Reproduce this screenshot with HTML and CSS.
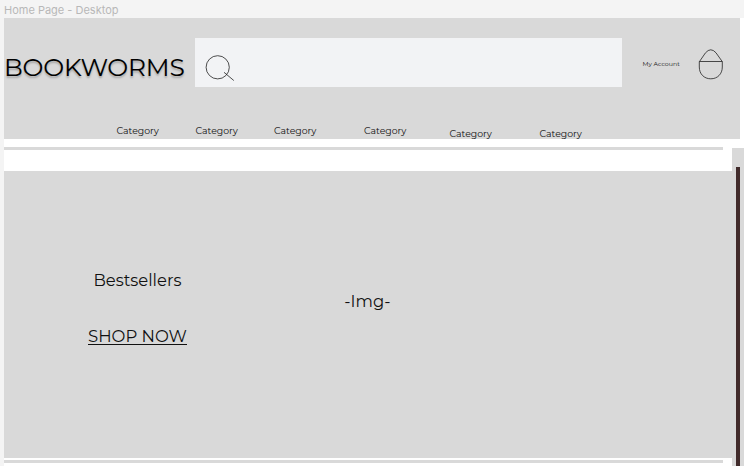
FILE: index.html
```html
<!DOCTYPE html>
<html lang="en">
<head>
<meta charset="utf-8">
<title>Bookworms</title>
<link rel="stylesheet" href="styles.css">
</head>
<body>
<div class="frame-label">Home Page - Desktop</div>
<div class="page">
  <header class="header">
    <div class="top-row">
      <h1 class="logo">BOOKWORMS</h1>
      <div class="search">
        <svg width="30" height="28" viewBox="0 0 30 28"><circle cx="12.7" cy="12.3" r="11.6"/><path d="M19 17.3L28.8 25.5"/></svg>
      </div>
      <a class="account">My Account</a>
      <svg class="bag" width="26" height="32" viewBox="0 0 26 32"><path d="M1.5 12.5L7.5 3.8Q12.8 -2.2 18 3.8L24.2 12.5"/><path d="M1.3 12.5H24.3V18C24.3 25 19.5 29.8 12.8 29.8S1.3 25 1.3 18Z"/></svg>
    </div>
    <nav class="nav">
      <a>Category</a>
      <a>Category</a>
      <a>Category</a>
      <a>Category</a>
      <a class="low">Category</a>
      <a class="low">Category</a>
    </nav>
  </header>
  <div class="body">
    <main class="content">
      <div class="rule"></div>
      <section class="hero">
        <div class="promo">
          <h2 class="best">Bestsellers</h2>
          <a class="shop">SHOP NOW</a>
        </div>
        <div class="img">-Img-</div>
      </section>
      <div class="rule rule-end"></div>
    </main>
    <aside class="track"><div class="thumb"></div></aside>
  </div>
</div>
</body>
</html>
```
FILE: styles.css
```css
* { box-sizing: border-box; }
body {
  margin: 0;
  height: 466px;
  overflow: hidden;
  background: #f4f4f4;
  color: #111;
  font-family: Montserrat, Lato, sans-serif;
  white-space: nowrap;
}
h1, h2 { margin: 0; font-weight: 400; }
.frame-label {
  height: 18px;
  padding-left: 4px;
  font: 11px/20px Inter, sans-serif;
  color: #b8b8b8;
}
.page { margin-left: 4px; height: 448px; background: #fff; }
.header { width: 736.4px; height: 121px; background: #d9d9d9; }
.top-row { display: flex; height: 107px; }
.logo {
  width: 190.6px;
  padding-top: 34px;
  font-size: 24.9px;
  line-height: 30px;
  letter-spacing: -0.2px;
  color: #000;
  text-shadow: 0 2px 2px rgba(0, 0, 0, .25);
}
.search { width: 427.2px; height: 49px; margin-top: 20px; padding: 17px 0 0 10px; background: #f2f3f5; }
svg { display: block; fill: none; stroke: #222; stroke-width: .8; }
.account { width: 56px; margin-left: 20.7px; padding-top: 41px; font-size: 6.25px; line-height: 10px; }
.bag { margin-top: 31px; }
.nav {
  display: grid;
  grid-template-columns: 79px 78.5px 90px 85.5px 90px 60px;
  padding-left: 112.5px;
  font-size: 9.35px;
  line-height: 12px;
}
.nav .low { padding-top: 3px; }
.body { display: flex; justify-content: space-between; height: 327px; }
.content { width: 728px; }
.rule { width: 719px; height: 3px; margin-top: 7.5px; background: #d9d9d9; }
.hero { display: flex; height: 287.5px; margin-top: 21px; background: #d9d9d9; font-size: 16.5px; line-height: 20px; }
.promo { width: 340.3px; padding: 99.5px 0 0 84px; }
.best { padding-left: 5.4px; font-size: 16.4px; }
.shop { display: block; width: 99px; height: 19px; margin-top: 36px; border-bottom: 1px solid #111; }
.img { padding-top: 120px; font-size: 16.4px; }
.rule-end { margin-top: 2px; }
.track { width: 12px; margin-top: 9px; padding: 19px 0 0 4px; background: #d9d9d9; }
.thumb { width: 3.5px; height: 100%; background: #412b2b; }
```
